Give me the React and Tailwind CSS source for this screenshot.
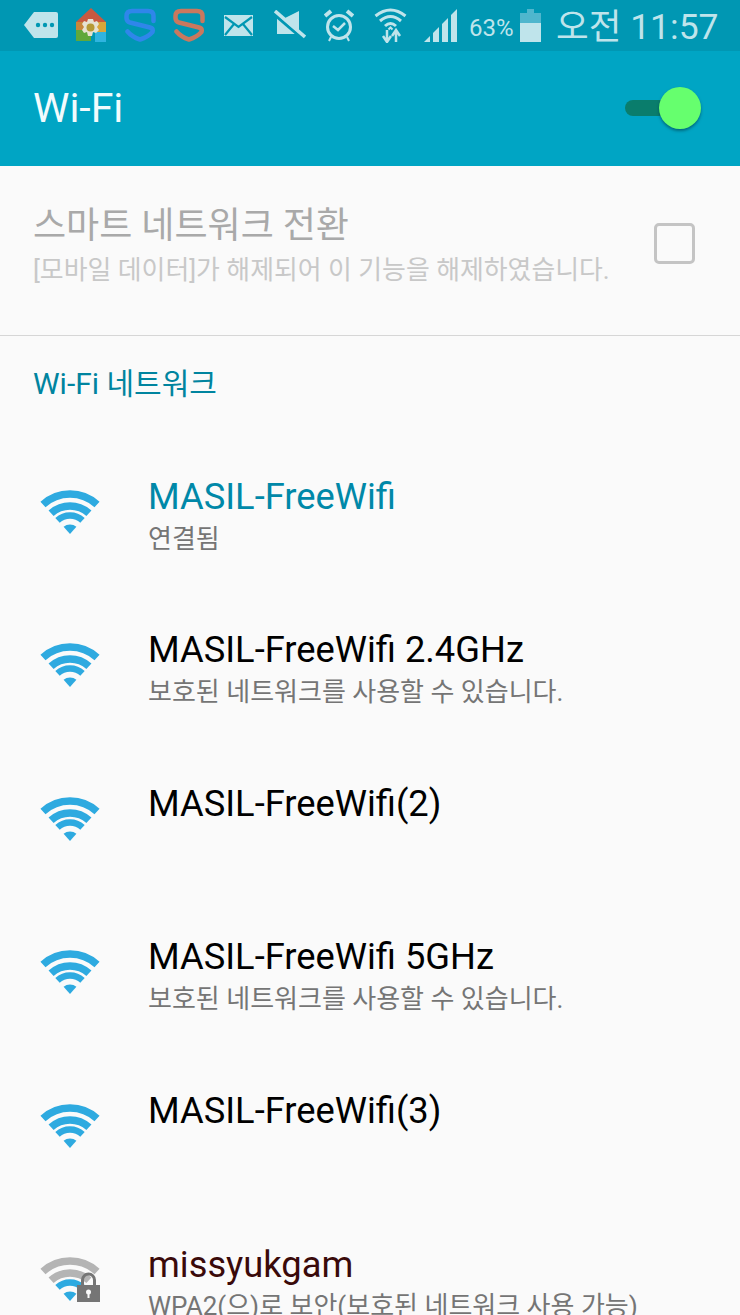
const FONT = "font-['Roboto','Noto_Sans_CJK_KR',sans-serif]";

const NETWORKS = [
  { name: "MASIL-FreeWifi", sub: "연결됨", nameClass: "text-[#0088a8]" },
  { name: "MASIL-FreeWifi 2.4GHz", sub: "보호된 네트워크를 사용할 수 있습니다." },
  { name: "MASIL-FreeWifi(2)" },
  { name: "MASIL-FreeWifi 5GHz", sub: "보호된 네트워크를 사용할 수 있습니다." },
  { name: "MASIL-FreeWifi(3)" },
];

// one band of the wifi fan, apex at the bottom middle of a 58x44 box
function arcPath(r, deg = 42.5) {
  const a = (deg * Math.PI) / 180;
  const dx = r * Math.sin(a);
  const y = 44 - r * Math.cos(a);
  return `M${29 - dx} ${y}A${r} ${r} 0 0 1 ${29 + dx} ${y}`;
}

function WifiFan({ weak = false }) {
  const outer = weak ? "#b4b4b4" : "#2eaae0";
  return (
    <svg width="58" height="44" viewBox="0 0 58 44" fill="none" className="overflow-visible">
      <path d={arcPath(40)} stroke={outer} strokeWidth="7.500" />
      <path d={arcPath(28)} stroke={outer} strokeWidth="7.500" />
      <path d={arcPath(18.5)} stroke="#2eaae0" strokeWidth="6.500" />
      <path d="M22.6 36.8A10 10 0 0 1 35.4 36.8L29 44Z" fill="#2eaae0" />
    </svg>
  );
}

function LockBadge() {
  return (
    <svg width="23" height="30" viewBox="0 0 23 30" className="absolute left-[36px] top-[15px]">
      <path d="M5.5 14V8a6 6 0 0 1 12 0V14" fill="none" stroke="#757575" strokeWidth="3" />
      <rect x="0" y="13" width="23" height="17" fill="#757575" />
      <circle cx="11.500" cy="20" r="2.500" fill="#fafafa" />
      <rect x="10.500" y="20" width="2" height="6" fill="#fafafa" />
    </svg>
  );
}

function ShieldS({ color, className }) {
  return (
    <svg width="32" height="34" viewBox="0 0 32 34" fill="none" stroke={color} strokeWidth="4.500" strokeLinejoin="round" strokeLinecap="round" className={className}>
      <path d="M29.500 13V8Q29.500 3 24 3H8Q2.500 3 2.500 8V10Q2.500 13.500 6 14.500L26 19.500Q29.500 20.500 28.500 24Q24 29 16 31.500Q8 29 3.500 23.500" />
    </svg>
  );
}

function StatusIcons() {
  const c = "#bfe4eb";
  return (
    <div className="flex items-center">
      {/* message bubble */}
      <svg width="34" height="26" viewBox="0 0 34 26" className="ml-[24px]">
        <path d="M10 0H32a2 2 0 0 1 2 2V24a2 2 0 0 1-2 2H10L0 13Z" fill={c} />
        <circle cx="14" cy="13" r="2.200" fill="#0097b3" />
        <circle cx="21" cy="13" r="2.200" fill="#0097b3" />
        <circle cx="28" cy="13" r="2.200" fill="#0097b3" />
      </svg>
      {/* app store house */}
      <svg width="32" height="34" viewBox="0 0 32 34" className="ml-[17px]">
        <path d="M16 0L31 14H1Z" fill="#c8593f" />
        <rect x="1" y="14" width="15" height="19" fill="#5fa83b" />
        <rect x="16" y="14" width="15" height="10" fill="#d8a63a" />
        <rect x="1" y="14" width="10" height="8" fill="#c8873a" />
        <rect x="20" y="24" width="11" height="10" fill="#2fb4e0" />
        <path d="M13 11H18L19 14L22 13L24 16L22 19L24 22L21 25L18 24L17 28H13L12 24L9 25L7 22L9 19L7 16L9 13L12 14Z" fill="#e6e2d2" />
        <circle cx="15.500" cy="19.500" r="4" fill="#b59a35" />
      </svg>
      <ShieldS color="#2f86ea" className="ml-[17px]" />
      <ShieldS color="#c9785e" className="ml-[17px]" />
      {/* mail */}
      <svg width="29" height="21" viewBox="0 0 29 21" className="ml-[19px]">
        <rect width="29" height="21" fill={c} />
        <path d="M1 2L14.500 12L28 2M1 20L10 9M28 20L19 9" fill="none" stroke="#0097b3" strokeWidth="2.200" />
      </svg>
      {/* mute */}
      <svg width="32" height="30" viewBox="0 0 32 30" className="ml-[21px]">
        <path d="M3 8H11L25 1V24H3Z" fill={c} />
        <path d="M1 5L30 30" stroke="#0097b3" strokeWidth="3" />
        <path d="M1 1L31 27" stroke={c} strokeWidth="3.500" />
      </svg>
      {/* alarm */}
      <svg width="30" height="33" viewBox="0 0 30 33" fill="none" stroke={c} className="ml-[18px]">
        <circle cx="15" cy="18" r="11.500" strokeWidth="3" />
        <path d="M9 17L14 21L21 14" strokeWidth="2.500" />
        <path d="M1 7L7 2M29 7L23 2" strokeWidth="4" />
        <path d="M7 28L5 32M23 28L25 32" strokeWidth="2" />
      </svg>
      {/* wifi with arrows */}
      <svg width="33" height="36" viewBox="0 0 33 36" fill="none" stroke={c} className="ml-[20px]">
        <path d="M1.500 9Q16.500 -3 31.500 9" strokeWidth="3" />
        <path d="M6 14Q16.500 5 27 14" strokeWidth="3" />
        <path d="M11 19Q16.500 14 22 19" strokeWidth="3" />
        <path d="M14.500 22.500L16.500 20.500L18.500 22.500" strokeWidth="2" />
        <path d="M13 23V33M9 29L13 35L17 29" strokeWidth="2.500" />
        <path d="M22 35V25M18 29L22 23L26 29" strokeWidth="2.500" />
      </svg>
      {/* signal */}
      <svg width="33" height="33" viewBox="0 0 33 33" fill={c} className="ml-[17px]">
        <path d="M0 33L6 27V33Z" />
        <path d="M9 24L15 18V33H9Z" />
        <path d="M18 15L24 9V33H18Z" />
        <path d="M27 6L33 0V33H27Z" />
      </svg>
      <span className="ml-[12px] mt-[6px] w-[45px] whitespace-nowrap text-[24px] leading-none text-[#bfe4eb]">63%</span>
      {/* battery */}
      <svg width="21" height="33" viewBox="0 0 21 33" className="ml-[6px]">
        <path d="M7 0H14V4H21V33H0V4H7Z" fill="#4fb6cd" />
        <rect y="14" width="21" height="19" fill={c} />
      </svg>
      <span className="ml-[15px] mt-[5px] whitespace-nowrap text-[35.500px] leading-none text-[#bfe4eb]">오전 11:57</span>
    </div>
  );
}

function NetworkRow({ name, sub, nameClass = "text-black", subClass = "mt-[2px]", weak, locked }) {
  return (
    <div className="flex h-[153.4px] shrink-0 items-start">
      <div className="relative ml-[41px] mt-[14px] h-[44px] w-[58px] shrink-0">
        <WifiFan weak={weak} />
        {locked && <LockBadge />}
      </div>
      <div className="ml-[49px] min-w-0 pt-[1px]">
        <p className={`whitespace-nowrap text-[36.300px] leading-[40px] ${nameClass}`}>{name}</p>
        {sub && <p className={`whitespace-nowrap text-[26px] leading-[40px] text-[#757575] ${subClass}`}>{sub}</p>}
      </div>
    </div>
  );
}

export default function App() {
  return (
    <div className={`${FONT} flex h-[1315px] w-[740px] flex-col overflow-hidden bg-[#fafafa]`}>
      <div className="flex h-[51px] shrink-0 items-center bg-[#0097b3] pb-[1px]">
        <StatusIcons />
      </div>

      <header className="flex h-[115px] shrink-0 items-center justify-between bg-[#00a5c4] pl-[33px]">
        <h1 className="text-[41px] font-normal leading-none text-[#f2fbfd]">Wi-Fi</h1>
        <div className="relative mr-[39px] h-[43px] w-[76px]">
          <div className="absolute left-0 top-[13px] h-[16px] w-[50px] rounded-full bg-[#0a7d6c]" />
          <div className="absolute right-0 top-0 h-[42px] w-[42px] rounded-full bg-[#66ff6e] shadow-[0_2px_3px_rgba(0,60,70,0.55)]" />
        </div>
      </header>

      <section className="flex h-[170px] shrink-0 items-center justify-between border-b border-[#d6d6d6] pb-[6px] pl-[33px] pr-[45px]">
        <div>
          <p className="whitespace-nowrap text-[36px] leading-[44px] text-[#a9a9a9]">스마트 네트워크 전환</p>
          <p className="whitespace-nowrap text-[25.900px] leading-[44px] text-[#c8c8c8]">[모바일 데이터]가 해제되어 이 기능을 해제하였습니다.</p>
        </div>
        <div className="mt-[-9px] h-[41px] w-[41px] shrink-0 rounded-[5px] border-[3px] border-[#c4c4c4]" />
      </section>

      <h2 className="mt-[30px] pl-[33px] text-[30px] font-normal leading-[36px] text-[#00849f]">Wi-Fi 네트워크</h2>

      <div className="mt-[74px] flex flex-col">
        {NETWORKS.map((n) => (
          <NetworkRow key={n.name} {...n} />
        ))}
        <NetworkRow
          name="missyukgam"
          sub="WPA2(으)로 보안(보호된 네트워크 사용 가능)"
          nameClass="mt-[1px] text-[#3a0a0a]"
          subClass="mt-[1px]"
          weak
          locked
        />
      </div>
    </div>
  );
}
